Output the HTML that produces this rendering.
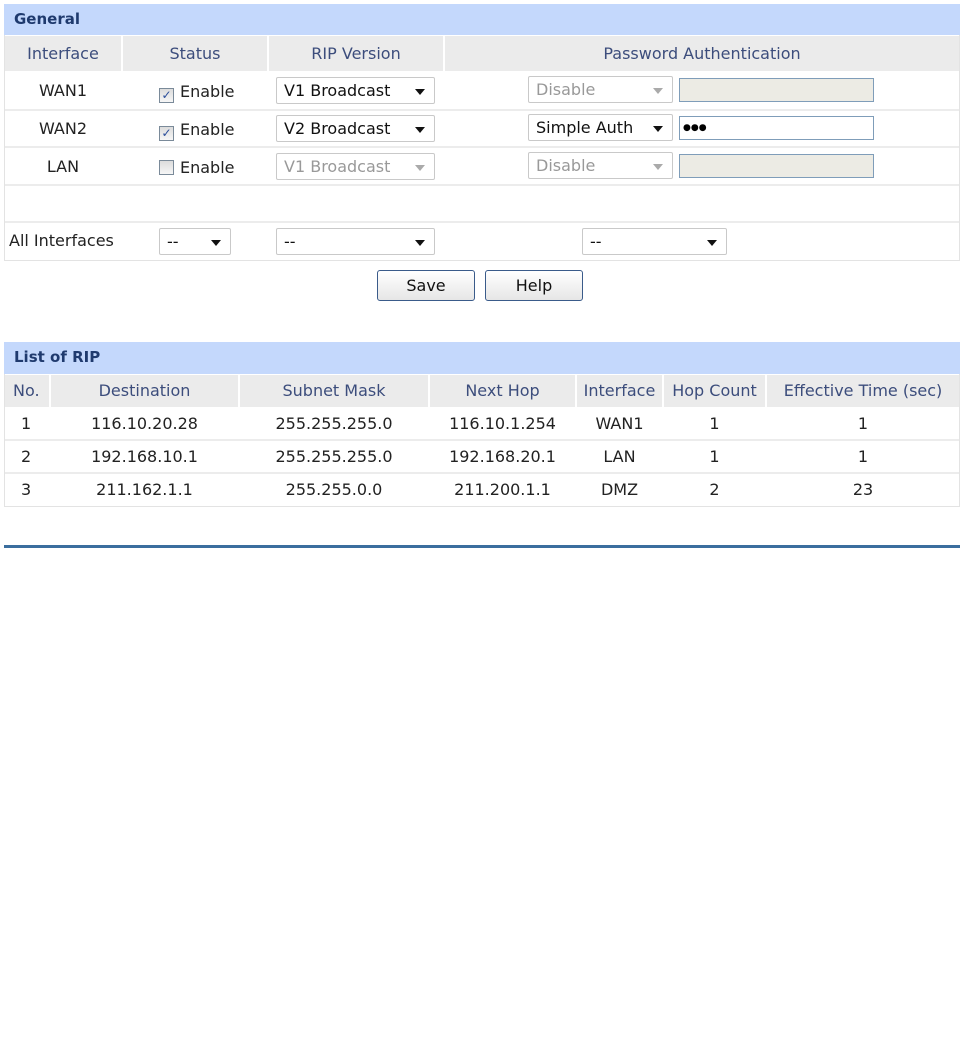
<!DOCTYPE html>
<html><head><meta charset="utf-8"><style>
*{margin:0;padding:0;box-sizing:border-box}
body{width:964px;height:1048px;background:#fff;position:relative;font-family:"DejaVu Sans","Liberation Sans",sans-serif;font-size:16px;color:#222;overflow:hidden}
.a{position:absolute}
.bar{background:#c4d8fc;color:#1f3a6e;font-weight:bold;font-size:15px;padding-left:10px}
.hd{background:#ebebeb;color:#3c4d7c;text-align:center;font-size:16px}
.c{text-align:center}
.sel{position:absolute;background:#fff;border:1px solid #c9c9c9;border-radius:2px;padding-left:7px;font-size:16px;color:#111}
.sel.dis{color:#999}
.sel::after{content:"";position:absolute;right:9px;top:50%;margin-top:-2px;border-left:5px solid transparent;border-right:5px solid transparent;border-top:6px solid #111}
.sel.dis::after{border-top-color:#aaa}
.txt{position:absolute;border:1px solid #7f9db9;background:#ecebe4}
.cb{display:inline-block;width:15px;height:15px;border:1px solid #7a8a99;background:linear-gradient(#dcdcdc,#f6f6f6);vertical-align:-2px;margin-right:6px;position:relative;font-size:12px;line-height:13px;text-align:center;color:#2a4d9a}
.btn{position:absolute;border:1px solid #3a5b8a;border-radius:3px;background:linear-gradient(#fff,#e6e6e6);text-align:center;line-height:29px;color:#111}
.line{background:#ececec}
</style></head><body>
<div class="a" style="left:4px;top:4px;width:956px;height:257px;border:1px solid #e3e3e3"></div>
<div class="a bar" style="left:4px;top:4px;width:956px;height:31px;line-height:30px">General</div>
<div class="a hd" style="left:5px;top:36px;width:116px;height:35px;line-height:35px">Interface</div>
<div class="a hd" style="left:123px;top:36px;width:144px;height:35px;line-height:35px">Status</div>
<div class="a hd" style="left:269px;top:36px;width:174px;height:35px;line-height:35px">RIP Version</div>
<div class="a hd" style="left:445px;top:36px;width:514px;height:35px;line-height:35px">Password Authentication</div>
<div class="a line" style="left:5px;top:109px;width:954px;height:2px"></div>
<div class="a line" style="left:5px;top:146px;width:954px;height:2px"></div>
<div class="a line" style="left:5px;top:184px;width:954px;height:2px"></div>
<div class="a line" style="left:5px;top:221px;width:954px;height:2px"></div>
<div class="a c" style="left:5px;top:72px;width:116px;line-height:37px">WAN1</div>
<div class="a c" style="left:5px;top:110px;width:116px;line-height:37px">WAN2</div>
<div class="a c" style="left:5px;top:148px;width:116px;line-height:37px">LAN</div>
<div class="a" style="left:159px;top:82px"><span class="cb">✓</span>Enable</div>
<div class="a" style="left:159px;top:120px"><span class="cb">✓</span>Enable</div>
<div class="a" style="left:159px;top:158px"><span class="cb"></span>Enable</div>
<div class="sel" style="left:276px;top:77px;width:159px;height:27px;line-height:26px">V1 Broadcast</div>
<div class="sel" style="left:276px;top:115px;width:159px;height:27px;line-height:26px">V2 Broadcast</div>
<div class="sel dis" style="left:276px;top:153px;width:159px;height:27px;line-height:26px">V1 Broadcast</div>
<div class="sel dis" style="left:528px;top:76px;width:145px;height:27px;line-height:25px">Disable</div>
<div class="sel" style="left:528px;top:114px;width:145px;height:27px;line-height:25px">Simple Auth</div>
<div class="sel dis" style="left:528px;top:152px;width:145px;height:27px;line-height:25px">Disable</div>
<div class="txt" style="left:679px;top:78px;width:195px;height:24px"></div>
<div class="txt" style="left:679px;top:116px;width:195px;height:24px;background:#fff;font-size:9px;line-height:22px;padding-left:3px;color:#000">●●●</div>
<div class="txt" style="left:679px;top:154px;width:195px;height:24px"></div>
<div class="a" style="left:9px;top:222px;line-height:38px">All Interfaces</div>
<div class="sel" style="left:159px;top:228px;width:72px;height:27px;line-height:26px">--</div>
<div class="sel" style="left:276px;top:228px;width:159px;height:27px;line-height:26px">--</div>
<div class="sel" style="left:582px;top:228px;width:145px;height:27px;line-height:26px">--</div>
<div class="btn" style="left:377px;top:270px;width:98px;height:31px">Save</div>
<div class="btn" style="left:485px;top:270px;width:98px;height:31px">Help</div>
<div class="a" style="left:4px;top:342px;width:956px;height:165px;border:1px solid #e3e3e3"></div>
<div class="a bar" style="left:4px;top:342px;width:956px;height:32px;line-height:31px">List of RIP</div>
<div class="a hd" style="left:5px;top:375px;width:44px;height:32px;line-height:32px;text-align:left;padding-left:8px">No.</div>
<div class="a hd" style="left:51px;top:375px;width:187px;height:32px;line-height:32px">Destination</div>
<div class="a hd" style="left:240px;top:375px;width:188px;height:32px;line-height:32px">Subnet Mask</div>
<div class="a hd" style="left:430px;top:375px;width:145px;height:32px;line-height:32px">Next Hop</div>
<div class="a hd" style="left:577px;top:375px;width:85px;height:32px;line-height:32px">Interface</div>
<div class="a hd" style="left:664px;top:375px;width:101px;height:32px;line-height:32px">Hop Count</div>
<div class="a hd" style="left:767px;top:375px;width:192px;height:32px;line-height:32px">Effective Time (sec)</div>
<div class="a line" style="left:5px;top:439px;width:954px;height:2px"></div>
<div class="a line" style="left:5px;top:472px;width:954px;height:2px"></div>
<div class="a" style="left:5px;top:408px;width:954px">
<div class="a" style="left:16px;top:0;line-height:32px">1</div>
<div class="a c" style="left:46px;top:0;width:187px;line-height:32px">116.10.20.28</div>
<div class="a c" style="left:235px;top:0;width:188px;line-height:32px">255.255.255.0</div>
<div class="a c" style="left:425px;top:0;width:145px;line-height:32px">116.10.1.254</div>
<div class="a c" style="left:572px;top:0;width:85px;line-height:32px">WAN1</div>
<div class="a c" style="left:659px;top:0;width:101px;line-height:32px">1</div>
<div class="a c" style="left:762px;top:0;width:192px;line-height:32px">1</div>
</div>
<div class="a" style="left:5px;top:441px;width:954px">
<div class="a" style="left:16px;top:0;line-height:32px">2</div>
<div class="a c" style="left:46px;top:0;width:187px;line-height:32px">192.168.10.1</div>
<div class="a c" style="left:235px;top:0;width:188px;line-height:32px">255.255.255.0</div>
<div class="a c" style="left:425px;top:0;width:145px;line-height:32px">192.168.20.1</div>
<div class="a c" style="left:572px;top:0;width:85px;line-height:32px">LAN</div>
<div class="a c" style="left:659px;top:0;width:101px;line-height:32px">1</div>
<div class="a c" style="left:762px;top:0;width:192px;line-height:32px">1</div>
</div>
<div class="a" style="left:5px;top:474px;width:954px">
<div class="a" style="left:16px;top:0;line-height:32px">3</div>
<div class="a c" style="left:46px;top:0;width:187px;line-height:32px">211.162.1.1</div>
<div class="a c" style="left:235px;top:0;width:188px;line-height:32px">255.255.0.0</div>
<div class="a c" style="left:425px;top:0;width:145px;line-height:32px">211.200.1.1</div>
<div class="a c" style="left:572px;top:0;width:85px;line-height:32px">DMZ</div>
<div class="a c" style="left:659px;top:0;width:101px;line-height:32px">2</div>
<div class="a c" style="left:762px;top:0;width:192px;line-height:32px">23</div>
</div>
<div class="a" style="left:4px;top:545px;width:956px;height:3px;background:#3b6e9e"></div>
</body></html>
